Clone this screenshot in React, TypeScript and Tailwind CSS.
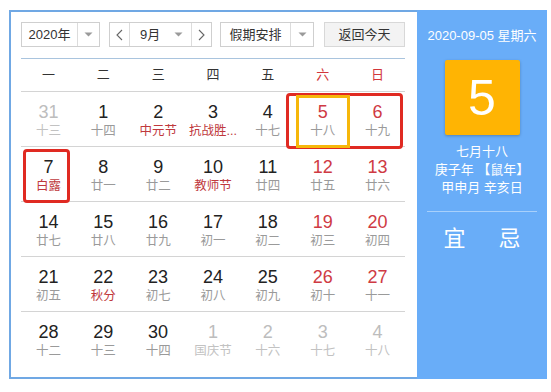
import React from "react";

type Cell = { d: string; l: string; kind: "norm" | "wk" | "other"; hol?: boolean };

const rows: Cell[][] = [
  [
    { d: "31", l: "十三", kind: "other" },
    { d: "1", l: "十四", kind: "norm" },
    { d: "2", l: "中元节", kind: "norm", hol: true },
    { d: "3", l: "抗战胜...", kind: "norm", hol: true },
    { d: "4", l: "十七", kind: "norm" },
    { d: "5", l: "十八", kind: "wk" },
    { d: "6", l: "十九", kind: "wk" },
  ],
  [
    { d: "7", l: "白露", kind: "norm", hol: true },
    { d: "8", l: "廿一", kind: "norm" },
    { d: "9", l: "廿二", kind: "norm" },
    { d: "10", l: "教师节", kind: "norm", hol: true },
    { d: "11", l: "廿四", kind: "norm" },
    { d: "12", l: "廿五", kind: "wk" },
    { d: "13", l: "廿六", kind: "wk" },
  ],
  [
    { d: "14", l: "廿七", kind: "norm" },
    { d: "15", l: "廿八", kind: "norm" },
    { d: "16", l: "廿九", kind: "norm" },
    { d: "17", l: "初一", kind: "norm" },
    { d: "18", l: "初二", kind: "norm" },
    { d: "19", l: "初三", kind: "wk" },
    { d: "20", l: "初四", kind: "wk" },
  ],
  [
    { d: "21", l: "初五", kind: "norm" },
    { d: "22", l: "秋分", kind: "norm", hol: true },
    { d: "23", l: "初七", kind: "norm" },
    { d: "24", l: "初八", kind: "norm" },
    { d: "25", l: "初九", kind: "norm" },
    { d: "26", l: "初十", kind: "wk" },
    { d: "27", l: "十一", kind: "wk" },
  ],
  [
    { d: "28", l: "十二", kind: "norm" },
    { d: "29", l: "十三", kind: "norm" },
    { d: "30", l: "十四", kind: "norm" },
    { d: "1", l: "国庆节", kind: "other" },
    { d: "2", l: "十六", kind: "other" },
    { d: "3", l: "十七", kind: "other" },
    { d: "4", l: "十八", kind: "other" },
  ],
];

const font = { fontFamily: '"Liberation Sans", "Noto Sans CJK SC", sans-serif' };

function Arrow() {
  return (
    <svg width="9" height="5" viewBox="0 0 9 5">
      <path d="M0.5 0.5 L8.5 0.5 L4.5 4.5 Z" fill="#9a9a9a" />
    </svg>
  );
}

function Chevron({ dir }: { dir: "l" | "r" }) {
  return (
    <svg width="7" height="12" viewBox="0 0 7 12">
      <path
        d={dir === "l" ? "M6 1 L1 6 L6 11" : "M1 1 L6 6 L1 11"}
        fill="none"
        stroke="#666"
        strokeWidth="1.1"
      />
    </svg>
  );
}

export default function App() {
  return (
    <div className="w-[551px] h-[392px] bg-white" style={font}>
      <div className="flex pl-[9px] pt-[10px]">
        {/* left calendar */}
        <div className="w-[408px] h-[369px] border-2 border-r-0 border-[#70a8e4] pl-[10px] pr-[12px] pt-[10px]">
          {/* toolbar */}
          <div className="flex h-[25px] text-[13px] text-[#333]">
            <div className="flex w-[79px] border border-[#cfcfcf] bg-white">
              <div className="w-[55px] flex items-center justify-center">2020年</div>
              <div className="flex-1 border-l border-[#dcdcdc] flex items-center justify-center">
                <Arrow />
              </div>
            </div>
            <div className="flex w-[103px] ml-[9px] border border-[#cfcfcf] bg-white">
              <div className="w-[20px] flex items-center justify-center border-r border-[#dcdcdc]">
                <Chevron dir="l" />
              </div>
              <div className="w-[61px] flex items-center pl-[10px] pr-[8px] justify-between">
                <span>9月</span>
                <Arrow />
              </div>
              <div className="flex-1 flex items-center justify-center border-l border-[#dcdcdc]">
                <Chevron dir="r" />
              </div>
            </div>
            <div className="flex w-[94px] ml-[8px] border border-[#cfcfcf] bg-white">
              <div className="w-[69px] flex items-center justify-center">假期安排</div>
              <div className="flex-1 border-l border-[#dcdcdc] flex items-center justify-center">
                <Arrow />
              </div>
            </div>
            <div className="w-[81px] ml-[10px] border border-[#d8d8d8] bg-[#f3f3f3] flex items-center justify-center">
              返回今天
            </div>
          </div>
          {/* separator */}
          <div className="mt-[11px] h-px bg-[#a9c4de]" />
          {/* weekday header */}
          <div className="grid grid-cols-7 h-[33px] items-center text-[13px] border-b border-[#d4d4d4]">
            {["一", "二", "三", "四", "五", "六", "日"].map((w, i) => (
              <div key={w} className={`text-center ${i >= 5 ? "text-[#d2363b]" : "text-[#333]"}`}>
                {w}
              </div>
            ))}
          </div>
          {/* grid */}
          <div className="relative">
            {rows.map((r, ri) => (
              <div
                key={ri}
                className={`grid grid-cols-7 h-[55px] ${ri < 4 ? "border-b border-[#d4d4d4]" : ""}`}
              >
                {r.map((c, ci) => {
                  const numColor =
                    c.kind === "other" ? "text-[#bdbdbd]" : c.kind === "wk" ? "text-[#cf3a43]" : "text-[#222]";
                  const lunColor =
                    c.kind === "other" ? "text-[#c2c2c2]" : c.hol ? "text-[#c0393d]" : "text-[#9a9a9a]";
                  return (
                    <div key={ci} className="flex flex-col items-center pt-[10px]">
                      <div className={`text-[18px] leading-[21px] ${numColor}`}>{c.d}</div>
                      <div className={`text-[12.5px] leading-[17px] ${lunColor} whitespace-nowrap`}>{c.l}</div>
                    </div>
                  );
                })}
              </div>
            ))}
            <div className="absolute left-[265px] top-[1px] w-[117px] h-[56px] border-[3px] border-[#e02a22] rounded-[4px]" />
            <div className="absolute left-[275px] top-[3px] w-[54px] h-[53px] border-[3px] border-[#f6b70a]" />
            <div className="absolute left-[2px] top-[57px] w-[47px] h-[54px] border-[3px] border-[#e02a22] rounded-[4px]" />
          </div>
        </div>
        {/* right panel */}
        <div className="w-[130px] h-[369px] bg-[#69adf8] flex flex-col items-center pt-[17px] text-white">
          <div className="text-[13px] leading-[18px]">2020-09-05 星期六</div>
          <div className="mt-[15px] w-[75px] h-[75px] bg-[#ffb403] rounded-[2px] shadow-[0_1px_3px_rgba(0,0,0,0.25)] flex items-center justify-center text-[50px] leading-none">
            5
          </div>
          <div className="mt-[8px] text-[13px] leading-[18px] text-center">
            <div>七月十八</div>
            <div>庚子年 【鼠年】</div>
            <div>甲申月 辛亥日</div>
          </div>
          <div className="mt-[14px] w-[110px] h-px bg-[#a8d0fb]" />
          <div className="mt-[13px] flex gap-[33px] text-[22px] leading-[28px]">
            <span>宜</span>
            <span>忌</span>
          </div>
        </div>
      </div>
    </div>
  );
}
